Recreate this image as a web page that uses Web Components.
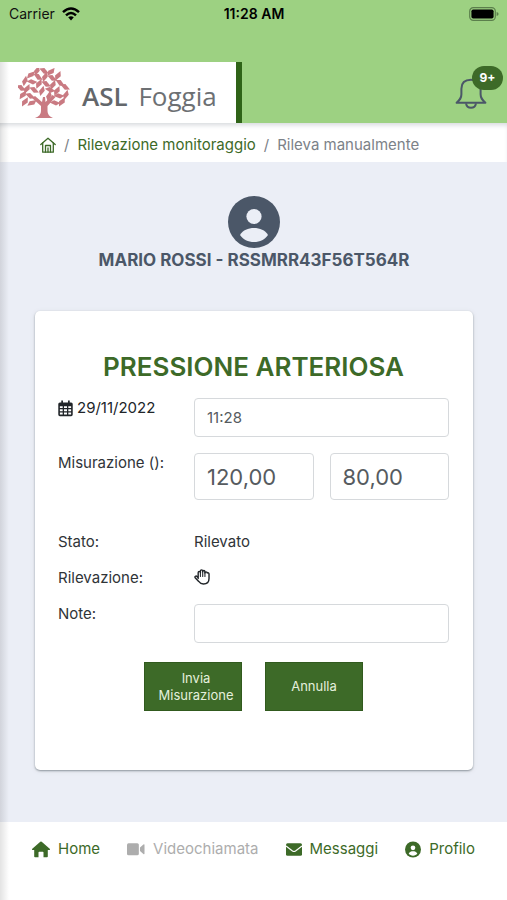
<!DOCTYPE html>
<html lang="it">
<head>
<meta charset="utf-8">
<meta name="viewport" content="width=device-width, initial-scale=1">
<title>ASL Foggia</title>
<style>
    :root {
        --green: #3d6a28;
        --light-green: #9dd182;
        --slate: #4b5768;
        --text: #303438;
        --border: #d6d9dc;
    }
    body {
        margin: 0;
        font-family: Inter, "Liberation Sans", sans-serif;
        font-size: 15px;
        line-height: 24px;
        color: var(--text);
    }
</style>
</head>
<body>
<monitor-app></monitor-app>

<script>
// all the icons of the page, by name
const ICONS = {
    wifi: {box: '0 0 18 14', body: `
        <g fill="none" stroke="currentColor" stroke-width="2.5">
            <path d="M1 5.2Q9-2.2 17 5.2"/><path d="M4 8.3Q9 3.6 14 8.3"/>
        </g>
        <path fill="currentColor" d="M6.2 10.3Q9 8 11.8 10.3L9 13.4z"/>`},
    battery: {box: '0 0 30 14', body: `
        <rect x=".7" y=".7" width="25.6" height="12.6" rx="3.6" fill="none" stroke="#5b7f4c" stroke-width="1.2"/>
        <rect x="2.4" y="2.4" width="22.2" height="9.2" rx="1.8" fill="#000"/>
        <path d="M27.6 5q2 .6 2 2t-2 2z" fill="#5b7f4c"/>`},
    bell: {box: '0 0 32 32', body: `
        <g fill="none" stroke="currentColor" stroke-width="2" stroke-linejoin="round">
            <path d="M16 2.8c-6.5 0-9.6 3.5-9.6 9v5.500c0 4-1.600 5.600-4.800 8.500h28.800c-3.200-2.900-4.800-4.500-4.800-8.500v-5.500c0-5.500-3.100-9-9.600-9z"/>
            <path d="M11 26.300c.5 3 2.300 4.400 5 4.400s4.500-1.400 5-4.400"/>
        </g>`},
    houseOutline: {box: '0 0 16 16', body: `
        <g fill="none" stroke="currentColor" stroke-width="1.3" stroke-linejoin="round" stroke-linecap="round">
            <path d="M.8 7.500L8 1.200l7.200 6.300"/><path d="M2.700 6v9.200h10.600V6"/>
            <path d="M5.500 15V8.500h5V15M8 11v4"/>
        </g>`},
    person: {box: '0 0 52 52', body: `
        <circle cx="26" cy="26" r="26" fill="currentColor"/>
        <circle cx="26" cy="20.500" r="7.600" fill="var(--icon-hole, #fff)"/>
        <path d="M12 39c3-5 8-7 14-7s11 2 14 7c-3 4.500-8 7-14 7s-11-2.500-14-7z" fill="var(--icon-hole, #fff)"/>`},
    calendar: {box: '0 0 16 17', body: `
        <path fill="currentColor" fill-rule="evenodd" d="M3.500 0h1.800v2h5.400V0h1.800v2H14a1.700 1.700 0 0 1 1.700 1.700V15A1.700 1.700 0 0 1 14 16.700H2A1.700 1.700 0 0 1 .3 15V3.700A1.700 1.700 0 0 1 2 2h1.500z
            M2 6v2h3V6zM6.400 6v2h3.200V6zM11 6v2h3V6zM2 9.300v2.200h3V9.300zM6.400 9.300v2.200h3.200V9.300zM11 9.300v2.200h3V9.300zM2 12.800V15h3v-2.200zM6.400 12.800V15h3.200v-2.200zM11 12.800V15h3v-2.200z"/>`},
    hand: {box: '0 0 18 18', body: `
        <g fill="none" stroke="currentColor" stroke-width="1.6" stroke-linejoin="round" stroke-linecap="round">
            <path d="M4.700 10.800V4.200c0-2 2.500-2 2.500 0V2.600c0-2.100 2.600-2.100 2.600 0v.6c0-1.900 2.500-1.900 2.500 0v1.300c0-1.700 2.600-1.700 2.600 0 .8-.5 2 0 2 1.200v5c0 3.800-2.600 6.200-6.300 6.200-2.600 0-4-1-5.300-2.900L1.300 9.900c-.8-1.600 1-2.600 2.100-1.400l1.300 1.400"/>
            <path stroke-width="1.2" d="M7.200 4v4.500M9.800 3.200v5.300M12.300 3.800v4.700"/>
        </g>`},
    house: {box: '0 0 18 16', body: `
        <path fill="currentColor" d="M8.300.3q.7-.5 1.400 0l8 7q.6.6 0 1.200H15.800V15q0 .8-.8.8h-3.500V11q0-.7-.7-.7H7.200q-.7 0-.7.700v4.800H3q-.8 0-.8-.8V8.500H.3q-.6-.6 0-1.200z"/>`},
    video: {box: '0 0 19 13', body: `
        <rect width="12.500" height="12.500" rx="1.600" fill="currentColor"/>
        <path fill="currentColor" d="M13.700 4.300L17.300 1.200q1.200-.6 1.200.5v9.100q0 1.100-1.200.5l-3.600-3.100z"/>`},
    envelope: {box: '0 0 16 13', body: `
        <rect y=".2" width="16" height="12.600" rx="1.500" fill="currentColor"/>
        <path d="M0 3l6.500 5q1.500 1 3 0L16 3" fill="none" stroke="#fff" stroke-width="1.200"/>`},
};

class AppIcon extends HTMLElement {
    constructor() {
        super();
        this.attachShadow({mode: 'open'});
    }

    connectedCallback() {
        const icon = ICONS[this.getAttribute('name')];
        this.shadowRoot.innerHTML = `
            <style>
                :host { display: inline-block; flex: none; width: 16px; height: 16px; }
                svg { display: block; width: 100%; height: 100%; }
            </style>
            <svg viewBox="${icon.box}" aria-hidden="true">${icon.body}</svg>
        `;
    }
}

class StatusBar extends HTMLElement {
    constructor() {
        super();
        this.attachShadow({mode: 'open'}).innerHTML = `
            <style>
                :host {
                    display: grid;
                    grid-template-columns: 1fr auto 1fr;
                    align-items: start;
                    height: 60px;
                    padding: 2px 8px 0 9px;
                    background: var(--light-green);
                    color: #111;
                    font-size: 14px;
                }
                .carrier { display: flex; align-items: center; gap: 7px; }
                .time { font-weight: 600; color: #000; }
                .battery { display: flex; align-items: center; justify-content: flex-end; height: 24px; }
                [name=wifi] { width: 18px; height: 14px; color: #000; }
                [name=battery] { width: 30px; height: 14px; }
            </style>
            <div class="carrier">Carrier <app-icon name="wifi"></app-icon></div>
            <div class="time">11:28 AM</div>
            <div class="battery"><app-icon name="battery"></app-icon></div>
        `;
    }
}

// x, y and rotation of every leaf of the tree
const LEAVES = [
    [19, 3, -50], [26, 3, 50], [33, 4, -25],
    [13, 7, -20], [20, 9, 55], [27, 9, -50], [34, 10, 50], [40, 8, -40],
    [7, 13, -55], [14, 14, 25], [21, 16, -40], [28, 16, 50], [35, 17, -45], [42, 15, 55],
    [3, 20, 50], [9, 21, -40], [16, 22, 50], [24, 23, -50], [32, 22, 35], [39, 23, -40], [47, 19, 50],
    [5, 27, -30], [12, 28, 45], [41, 28, 20], [48, 27, -50], [31, 28, -55],
    [7, 34, -35], [14, 35, -10], [37, 35, 25], [44, 34, -35]
];

class AslLogo extends HTMLElement {
    constructor() {
        super();
        const leaves = LEAVES.map(([x, y, angle]) =>
            `<path transform="translate(${x} ${y}) rotate(${angle})" d="M-5 1.900L-2-2.200H5L2 1.900z"/>`
        ).join('');

        this.attachShadow({mode: 'open'}).innerHTML = `
            <style>
                :host { display: block; background: #fff; border-right: 6px solid #2f6318; }
                a {
                    display: flex;
                    align-items: center;
                    gap: 12px;
                    height: 61px;
                    padding: 0 19px 0 18px;
                    color: #6d7073;
                    font: 26px/32px "Open Sans", "Noto Sans", sans-serif;
                    text-decoration: none;
                    white-space: nowrap;
                }
                b { margin-right: 4px; font-weight: 600; color: #63676b; }
                .name { padding-top: 6px; }
                svg { width: 52px; height: 50px; flex: none; }
            </style>
            <a href="#">
                <svg viewBox="0 0 52 50" fill="#c97a82" aria-hidden="true">
                    ${leaves}
                    <path d="M17 50q6-2 6-7v-5l-9-8 3-2 7 6 1-5h2l.5 5 7-7 3 2-8 9v5q0 5 5.500 7z"/>
                </svg>
                <span class="name"><b>ASL</b> Foggia</span>
            </a>
        `;
    }
}

class AppHeader extends HTMLElement {
    constructor() {
        super();
        this.attachShadow({mode: 'open'}).innerHTML = `
            <style>
                :host {
                    display: flex;
                    justify-content: space-between;
                    align-items: center;
                    background: var(--light-green);
                }
                button {
                    position: relative;
                    margin: 0 20px 0 0;
                    padding: 0;
                    border: 0;
                    background: none;
                    color: var(--slate);
                    font: inherit;
                }
                app-icon { display: block; width: 32px; height: 32px; }
                .badge {
                    position: absolute;
                    top: -11px;
                    left: 17px;
                    width: 31px;
                    border-radius: 12px;
                    background: var(--green);
                    color: #fff;
                    font-size: 12px;
                    font-weight: 700;
                    line-height: 24px;
                    text-align: center;
                }
            </style>
            <asl-logo></asl-logo>
            <button type="button" aria-label="Notifiche">
                <app-icon name="bell"></app-icon>
                <span class="badge">9+</span>
            </button>
        `;
    }
}

class BreadCrumb extends HTMLElement {
    constructor() {
        super();
        this.attachShadow({mode: 'open'}).innerHTML = `
            <style>
                :host {
                    display: block;
                    padding: 10px 40px 5px;
                    background: #fff;
                    box-shadow: inset 0 4px 5px -2px #d5d8dc;
                    color: #7c8288;
                }
                nav { display: flex; align-items: center; gap: 8px; white-space: nowrap; }
                a { color: var(--green); text-decoration: none; }
                app-icon { display: block; }
            </style>
            <nav aria-label="Percorso">
                <a href="#" aria-label="Home"><app-icon name="houseOutline"></app-icon></a>
                <span>/</span>
                <a href="#">Rilevazione monitoraggio</a>
                <span>/</span>
                <span>Rileva manualmente</span>
            </nav>
        `;
    }
}

class PatientCard extends HTMLElement {
    constructor() {
        super();
        this.attachShadow({mode: 'open'}).innerHTML = `
            <style>
                :host {
                    display: flex;
                    flex-direction: column;
                    align-items: center;
                    color: var(--slate);
                    font-size: 17px;
                    font-weight: 700;
                    --icon-hole: #ebeef6;
                }
                app-icon { width: 52px; height: 52px; }
            </style>
            <app-icon name="person"></app-icon>
            <slot></slot>
        `;
    }
}

// one line of the form: label on the left, content on the right
class FormRow extends HTMLElement {
    constructor() {
        super();
        this.attachShadow({mode: 'open'}).innerHTML = `
            <style>
                :host { display: grid; grid-template-columns: 120px 1fr; gap: 16px; }
                .content { display: flex; gap: 16px; min-width: 0; }
            </style>
            <slot name="label"></slot>
            <div class="content"><slot></slot></div>
        `;
    }
}

class MeasurementForm extends HTMLElement {
    constructor() {
        super();
        this.attachShadow({mode: 'open'}).innerHTML = `
            <style>
                :host {
                    display: block;
                    padding: 39px 24px 59px 23px;
                    border-radius: 5px;
                    background: #fff;
                    box-shadow: 0 1px 2px #8f979f, 0 1px 5px #d9dce2;
                }
                h1 {
                    margin: 0 0 12px;
                    color: var(--green);
                    font-size: 26px;
                    font-weight: 600;
                    line-height: 34px;
                    text-align: center;
                }
                form { display: flex; flex-direction: column; gap: 12px; }
                form-row.measure { margin: 2px 0 18px; }
                label { white-space: nowrap; }
                .date { display: flex; align-items: center; gap: 4px; height: 24px; color: #212529; }
                .date app-icon { height: 17px; width: 15px; }
                input {
                    box-sizing: border-box;
                    flex: 1;
                    min-width: 0;
                    width: 100%;
                    height: 39px;
                    margin: 2px 0 0;
                    padding: 0 12px;
                    border: 1px solid var(--border);
                    border-radius: 4px;
                    background: #fff;
                    color: #565b60;
                    font: inherit;
                }
                .measure input { height: 47px; font-size: 22px; }
                .hand { width: 16px; height: 18px; margin-top: 2px; color: #212529; }
                .buttons { display: flex; justify-content: center; gap: 23px; margin-top: 7px; }
                button {
                    width: 98px;
                    height: 49px;
                    padding: 0 0 0 6px;
                    border: 1px solid #315a1e;
                    background: var(--green);
                    color: #e4f0dc;
                    font: inherit;
                    font-size: 13px;
                    line-height: 17px;
                }
                button.cancel { padding: 0; }
            </style>
            <h1>PRESSIONE ARTERIOSA</h1>
            <form>
                <form-row>
                    <label slot="label" class="date" for="time"><app-icon name="calendar"></app-icon>29/11/2022</label>
                    <input id="time" value="11:28">
                </form-row>
                <form-row class="measure">
                    <label slot="label" for="max">Misurazione ():</label>
                    <input id="max" inputmode="decimal" value="120,00">
                    <input id="min" inputmode="decimal" value="80,00" aria-label="Misurazione minima">
                </form-row>
                <form-row><span slot="label">Stato:</span>Rilevato</form-row>
                <form-row>
                    <span slot="label">Rilevazione:</span>
                    <app-icon class="hand" name="hand"></app-icon>
                </form-row>
                <form-row>
                    <label slot="label" for="note">Note:</label>
                    <input id="note">
                </form-row>
                <div class="buttons">
                    <button type="button">Invia Misurazione</button>
                    <button type="button" class="cancel">Annulla</button>
                </div>
            </form>
        `;
    }
}

class TabLink extends HTMLElement {
    constructor() {
        super();
        this.attachShadow({mode: 'open'});
    }

    connectedCallback() {
        this.shadowRoot.innerHTML = `
            <style>
                :host { display: block; color: var(--green); }
                :host([disabled]) { color: #adadad; }
                a { display: flex; align-items: center; gap: 8px; color: inherit; text-decoration: none; white-space: nowrap; }
                app-icon { width: var(--icon-width, 16px); height: 17px; }
            </style>
            <a href="#"><app-icon name="${this.getAttribute('icon')}"></app-icon><slot></slot></a>
        `;
    }
}

class TabBar extends HTMLElement {
    constructor() {
        super();
        this.attachShadow({mode: 'open'}).innerHTML = `
            <style>
                :host { display: block; min-height: 63px; padding: 15px 32px 0; background: #fff; }
                nav { display: flex; justify-content: space-between; }
                .wide { --icon-width: 18px; }
            </style>
            <nav>
                <tab-link icon="house" class="wide">Home</tab-link>
                <tab-link icon="video" class="wide" disabled>Videochiamata</tab-link>
                <tab-link icon="envelope">Messaggi</tab-link>
                <tab-link icon="person">Profilo</tab-link>
            </nav>
        `;
    }
}

class MonitorApp extends HTMLElement {
    constructor() {
        super();
        this.attachShadow({mode: 'open'}).innerHTML = `
            <style>
                :host { display: flex; flex-direction: column; min-height: 100vh; }
                .page { position: relative; flex: 1; display: flex; flex-direction: column; }
                .page::after {
                    content: "";
                    position: absolute;
                    inset: 0 auto 0 0;
                    width: 9px;
                    background: linear-gradient(to right, rgba(0, 0, 0, .11), rgba(0, 0, 0, 0));
                    pointer-events: none;
                }
                main {
                    display: flex;
                    flex-direction: column;
                    gap: 39px;
                    padding: 34px 34px 52px 35px;
                    background: #ebeef6;
                }
                tab-bar { flex: 1; }
            </style>
            <status-bar></status-bar>
            <div class="page">
                <app-header></app-header>
                <bread-crumb></bread-crumb>
                <main>
                    <patient-card>MARIO ROSSI - RSSMRR43F56T564R</patient-card>
                    <measurement-form></measurement-form>
                </main>
                <tab-bar></tab-bar>
            </div>
        `;
    }
}

customElements.define('app-icon', AppIcon);
customElements.define('status-bar', StatusBar);
customElements.define('asl-logo', AslLogo);
customElements.define('app-header', AppHeader);
customElements.define('bread-crumb', BreadCrumb);
customElements.define('patient-card', PatientCard);
customElements.define('form-row', FormRow);
customElements.define('measurement-form', MeasurementForm);
customElements.define('tab-link', TabLink);
customElements.define('tab-bar', TabBar);
customElements.define('monitor-app', MonitorApp);
</script>
</body>
</html>
